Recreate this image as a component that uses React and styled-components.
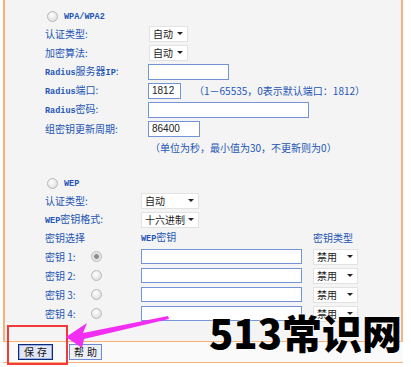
import React from "react";
import styled, { createGlobalStyle } from "styled-components";

const GlobalStyle = createGlobalStyle`
  html, body { margin: 0; padding: 0; background: #fff; }
  body { font-family: "Noto Sans CJK SC", "Liberation Sans", sans-serif; }
`;

const Page = styled.div`
  position: relative;
  width: 411px;
  height: 367px;
  overflow: hidden;
`;

const Panel = styled.div`
  box-sizing: border-box;
  margin-left: 3px;
  width: 400px;
  height: 341px;
  padding: 8px 0 0 40px;
  background: #f4f4f4;
  border-left: 2px solid #f7b27a;
  border-right: 2px solid #f7b27a;
`;

const Row = styled.div`
  display: grid;
  grid-template-columns: ${(p) => p.$cols};
  align-items: center;
  height: ${(p) => p.$h || 19}px;
  margin-top: ${(p) => p.$mt || 0}px;
`;

const RadioRow = styled.div`
  display: flex;
  align-items: center;
  gap: 6px;
  height: 16px;
  padding-left: 2px;
  margin-top: ${(p) => p.$mt || 0}px;
`;

const Label = styled.span`
  color: #2354b4;
  font-size: 10px;
  white-space: nowrap;
  line-height: 1;
`;

const Latin = styled.b`
  font-family: "Liberation Mono", monospace;
  font-size: 8.5px;
  font-weight: bold;
`;

const Radio = styled.span`
  display: inline-block;
  box-sizing: border-box;
  width: 11px;
  height: 11px;
  border-radius: 50%;
  border: 1px solid #b8b8b8;
  background: ${(p) =>
    p.$checked
      ? "radial-gradient(circle, #8c8c8c 0 2px, #d8d8d8 2.6px, #f4f4f4 5px)"
      : "radial-gradient(circle at 40% 35%, #ffffff, #d6d6d6)"};
`;

const Field = styled.div`
  display: flex;
  align-items: center;
  gap: ${(p) => p.$gap || 0}px;
`;

const Input = styled.input`
  box-sizing: border-box;
  width: ${(p) => p.$w}px;
  height: ${(p) => p.$h || 16}px;
  margin: 0;
  padding: 0 3px;
  border: 1px solid #7594d8;
  border-radius: 0;
  background: #fff;
  font-family: "Liberation Sans", sans-serif;
  font-size: 10px;
  color: #222;
  outline: none;
`;

const Select = styled.div`
  box-sizing: border-box;
  display: flex;
  align-items: center;
  justify-content: space-between;
  width: ${(p) => p.$w}px;
  height: 16px;
  margin-left: ${(p) => p.$ml || 0}px;
  padding: 0 4px 0 3px;
  background: #fff;
  border: 1px solid #e2e2e2;
  font-size: 10px;
  color: #222;
`;

const Caret = styled.span`
  width: 0;
  height: 0;
  border-left: 3px solid transparent;
  border-right: 3px solid transparent;
  border-top: 3px solid #222;
`;

const Hint = styled.span`
  color: #2354b4;
  font-size: 10px;
  white-space: nowrap;
  margin-left: ${(p) => p.$ml || 0}px;
`;

const KeyCell = styled.div`
  display: flex;
  align-items: center;
`;

const KeyLabel = styled(Label)`
  width: 46px;
`;

const Footer = styled.div`
  box-sizing: border-box;
  display: flex;
  align-items: center;
  gap: 16px;
  margin-left: 3px;
  width: 400px;
  height: 22px;
  padding-left: 15px;
  background: #fafafa;
  border-top: 1px solid #f7b27a;
  border-bottom: 1px solid #f7b27a;
`;

const Button = styled.button`
  box-sizing: border-box;
  width: ${(p) => p.$w}px;
  height: 16px;
  margin: 0;
  padding: 0;
  font-family: "Noto Sans CJK SC", sans-serif;
  font-size: 10px;
  letter-spacing: 3px;
  text-indent: 3px;
  line-height: 1;
  color: #111;
  background: ${(p) => (p.$primary ? "#e2e5f3" : "#eef0f8")};
  border: 1px solid ${(p) => (p.$primary ? "#0b2a7a" : "#6f88d4")};
  box-shadow: ${(p) => (p.$primary ? "inset 0 0 0 1px #9fb1e4" : "none")};
`;

const Watermark = styled.div`
  position: absolute;
  left: 209px;
  top: 312px;
  font-family: "Noto Sans CJK SC", sans-serif;
  font-size: 40px;
  font-weight: 900;
  line-height: 1;
  color: #000;
  white-space: nowrap;
  text-shadow: 0 0 3px rgba(255, 255, 255, 0.8);
`;

const RedBox = styled.div`
  position: absolute;
  left: 7px;
  top: 325px;
  width: 61px;
  height: 40px;
  box-sizing: border-box;
  border: 2px solid #f23a3a;
`;

const ArrowLayer = styled.svg`
  position: absolute;
  left: 0;
  top: 0;
  pointer-events: none;
`;

const S1 = "103px auto";
const S2 = "96px auto";
const KEYS = "96px 172px auto";

export default function App() {
  return (
    <Page>
      <GlobalStyle />
      <Panel>
        <RadioRow>
          <Radio />
          <Label><Latin>WPA/WPA2</Latin></Label>
        </RadioRow>
        <Row $cols={S1}>
          <Label>认证类型:</Label>
          <Select $w={39} $ml={1}>自动<Caret /></Select>
        </Row>
        <Row $cols={S1}>
          <Label>加密算法:</Label>
          <Select $w={39} $ml={1}>自动<Caret /></Select>
        </Row>
        <Row $cols={S1}>
          <Label><Latin>Radius</Latin>服务器<Latin>IP</Latin>:</Label>
          <Input $w={81} defaultValue="" />
        </Row>
        <Row $cols={S1}>
          <Label><Latin>Radius</Latin>端口:</Label>
          <Field $gap={13}>
            <Input $w={33} defaultValue="1812" />
            <Hint>（1－65535，0表示默认端口：1812）</Hint>
          </Field>
        </Row>
        <Row $cols={S1}>
          <Label><Latin>Radius</Latin>密码:</Label>
          <Input $w={161} defaultValue="" />
        </Row>
        <Row $cols={S1}>
          <Label>组密钥更新周期:</Label>
          <Input $w={52} defaultValue="86400" />
        </Row>
        <Row $cols={S1} $h={18}>
          <span />
          <Hint $ml={2}>（单位为秒，最小值为30，不更新则为0）</Hint>
        </Row>

        <RadioRow $mt={19}>
          <Radio />
          <Label><Latin>WEP</Latin></Label>
        </RadioRow>
        <Row $cols={S2}>
          <Label>认证类型:</Label>
          <Select $w={58}>自动<Caret /></Select>
        </Row>
        <Row $cols={S2}>
          <Label><Latin>WEP</Latin>密钥格式:</Label>
          <Select $w={58}>十六进制<Caret /></Select>
        </Row>
        <Row $cols={KEYS} $h={18}>
          <Label>密钥选择</Label>
          <Label><Latin>WEP</Latin>密钥</Label>
          <Label>密钥类型</Label>
        </Row>
        {[1, 2, 3, 4].map((n) => (
          <Row key={n} $cols={KEYS}>
            <KeyCell>
              <KeyLabel>密钥 {n}:</KeyLabel>
              <Radio $checked={n === 1} />
            </KeyCell>
            <Input $w={161} $h={15} defaultValue="" />
            <Select $w={45}>禁用<Caret /></Select>
          </Row>
        ))}
      </Panel>
      <Footer>
        <Button $primary $w={35}>保存</Button>
        <Button $w={33}>帮助</Button>
      </Footer>

      <RedBox />
      <ArrowLayer width="411" height="367" viewBox="0 0 411 367">
        <polygon points="66,337 87,323 83,333 168,316 169,319 84,339 82,348" fill="#f22ef2" />
      </ArrowLayer>
      <Watermark>513常识网</Watermark>
    </Page>
  );
}
